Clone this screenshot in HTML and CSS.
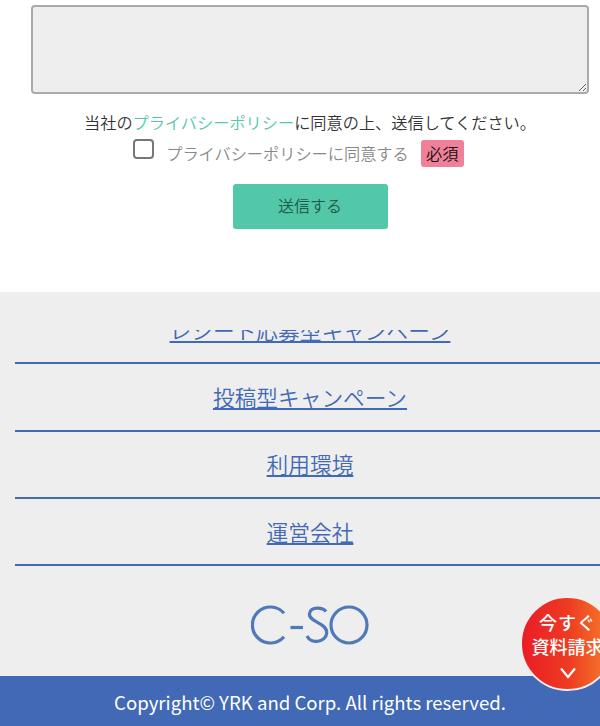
FILE: index.html
```html
<!DOCTYPE html>
<html lang="ja">
<head>
<meta charset="utf-8">
<title>C-SO</title>
<link rel="stylesheet" href="styles.css">
</head>
<body>
<section class="form">
  <textarea class="message" aria-label="お問い合わせ内容"></textarea>
  <p class="notice">当社の<a href="#" class="policy">プライバシーポリシー</a>に同意の上、送信してください。</p>
  <label class="agree">
    <span class="box"></span>
    <span class="agree-text">プライバシーポリシーに同意する</span>
    <span class="required">必須</span>
  </label>
  <button class="submit" type="button">送信する</button>
</section>
<section class="site-foot">
  <nav class="nav">
    <ul class="nav-list">
      <li class="nav-item"><a href="#">レシート応募型キャンペーン</a></li>
      <li class="nav-item"><a href="#">投稿型キャンペーン</a></li>
      <li class="nav-item"><a href="#">利用環境</a></li>
      <li class="nav-item"><a href="#">運営会社</a></li>
    </ul>
  </nav>
  <div class="logo">
    <svg width="118" height="40" viewBox="0 0 118 40" fill="none" stroke="#4f79b9" stroke-width="3.2" aria-label="C-SO">
      <path d="M33 8.2A18 18 0 1 0 33 31.8"/>
      <path d="M39.5 22.5H52"/>
      <path d="M75 6.5C72 2.5 60 1 58.5 8.5C57 17 76.5 18 75.7 28C75 37.5 60 39.5 56 31"/>
      <circle cx="98" cy="20" r="18"/>
    </svg>
  </div>
</section>
<footer class="copyright">Copyright© YRK and Corp. All rights reserved.</footer>
<a href="#" class="float-cta">
  <span class="cta-top">今すぐ</span>
  <span>資料請求</span>
  <svg class="chev" width="18" height="12" viewBox="0 0 18 12" fill="none" stroke="#fff" stroke-width="2.2"><path d="M2 1.5L9 10L16 1.5"/></svg>
</a>
</body>
</html>
```
FILE: styles.css
```css
* { box-sizing: border-box; }
html, body { margin: 0; padding: 0; }
body {
  width: 600px;
  height: 726px;
  overflow: hidden;
  position: relative;
  background: #fff;
  color: #333;
  font-family: "Noto Sans CJK JP", "Noto Sans", sans-serif;
  font-size: 16.2px;
  font-weight: 350;
}
.form {
  height: 292px;
  padding: 5px 0 0 20px;
  display: flex;
  flex-direction: column;
  align-items: center;
}
.message {
  display: block;
  width: 558px;
  height: 89px;
  background: #eee;
  border: 2px solid #aaa;
  border-radius: 4px;
  flex: none;
}
.notice {
  margin: 16px 0 0;
  line-height: 24px;
  white-space: nowrap;
}
.policy { color: #52c8a8; text-decoration: none; }
.agree {
  display: flex;
  align-items: center;
  margin: 5px 23px 0 0;
  height: 28px;
}
.box {
  width: 21px;
  height: 20px;
  border: 2px solid #777;
  border-radius: 4px;
  background: #fff;
  margin: -8px 12px 0 0;
}
.agree-text { color: #888; line-height: 28px; }
.required {
  margin-left: 12px;
  width: 43px;
  height: 27px;
  line-height: 27px;
  text-align: center;
  background: #f0809a;
  border-radius: 3px;
  color: #111;
}
.submit {
  display: block;
  margin: 17px 0 0;
  width: 155px;
  height: 45px;
  padding: 0 0 4px;
  border: 0;
  border-radius: 3px;
  background: #52c8a8;
  color: #1f5a4a;
  font: inherit;
  font-size: 16px;
}
.site-foot {
  height: 384px;
  background: #eee;
  padding-top: 38px;
}
.nav {
  height: 238px;
  overflow: hidden;
  padding-left: 15px;
}
.nav-list { list-style: none; margin: -33px -5px 0 0; padding: 0; }
.nav-item {
  height: 67.33px;
  border-bottom: 2px solid #4169b5;
  display: flex;
  align-items: center;
  justify-content: center;
  font-size: 21.7px;
  line-height: 30px;
}
.nav-item a { color: #4169b5; }
.logo { display: flex; justify-content: center; margin-top: 37px; padding-left: 20px; }
.logo svg { display: block; }
.copyright {
  height: 50px;
  background: #4169b5;
  color: #fff;
  text-align: center;
  font-size: 18.6px;
  font-weight: 400;
  line-height: 52px;
  padding-left: 20px;
  white-space: nowrap;
}
.float-cta {
  position: absolute;
  left: 520px;
  top: 596px;
  width: 95px;
  height: 95px;
  border-radius: 50%;
  border: 2px solid #f2eeee;
  background: linear-gradient(90deg, #ea1d26 0%, #ee3a22 50%, #f5802a 100%);
  color: #fff;
  text-decoration: none;
  display: flex;
  flex-direction: column;
  align-items: center;
  font-size: 18px;
  line-height: 24px;
  font-weight: 500;
  padding-top: 12px;
  white-space: nowrap;
}
.cta-top { letter-spacing: 1px; }
.chev { margin-top: 9px; }
```
